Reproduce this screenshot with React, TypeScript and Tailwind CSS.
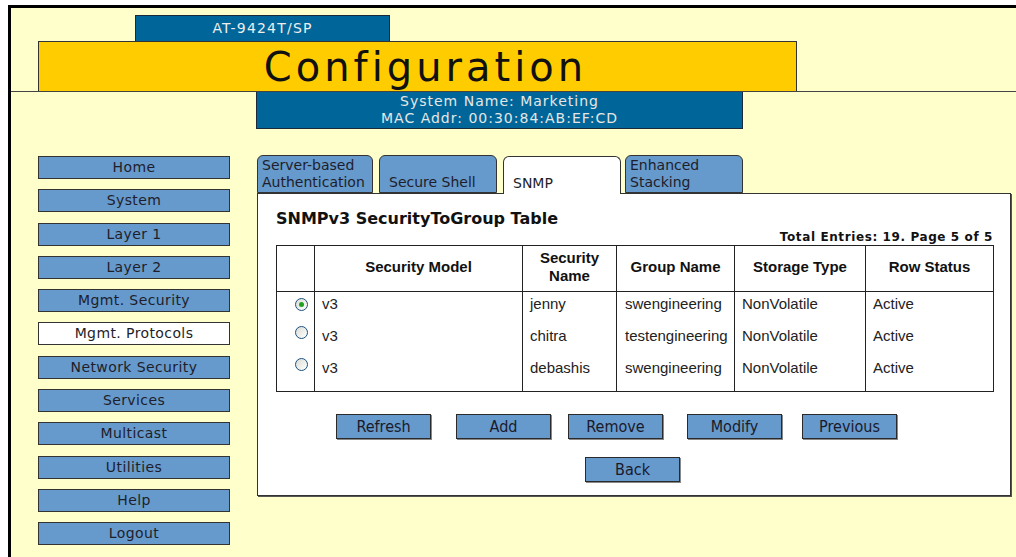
const NAV = [
  'Home',
  'System',
  'Layer 1',
  'Layer 2',
  'Mgmt. Security',
  'Mgmt. Protocols',
  'Network Security',
  'Services',
  'Multicast',
  'Utilities',
  'Help',
  'Logout',
];

const ROWS = [
  { model: 'v3', name: 'jenny', group: 'swengineering', storage: 'NonVolatile', status: 'Active', checked: true },
  { model: 'v3', name: 'chitra', group: 'testengineering', storage: 'NonVolatile', status: 'Active', checked: false },
  { model: 'v3', name: 'debashis', group: 'swengineering', storage: 'NonVolatile', status: 'Active', checked: false },
];

const verdana = "font-['DejaVu_Sans',Verdana,sans-serif]";
const condensed = "font-['DejaVu_Sans_Condensed','DejaVu_Sans',sans-serif]";

function Radio({ checked }: { checked: boolean }) {
  return (
    <span className="inline-flex w-[13px] h-[13px] rounded-full border border-[#1c5180] bg-gradient-to-br from-[#dcdcd5] to-white items-center justify-center">
      {checked && <span className="w-[5px] h-[5px] rounded-full bg-[#21a121]" />}
    </span>
  );
}

function Btn({ label, className = '' }: { label: string; className?: string }) {
  return (
    <div
      className={`w-[95px] h-[25px] bg-[#6699cc] border border-[#2a2a2a] shadow-[1px_1px_0_#888] flex items-center justify-center text-[16px] text-[#1a1a2a] ${condensed} ${className}`}
    >
      {label}
    </div>
  );
}

export default function App() {
  const tabs = [
    { label: ['Server-based', 'Authentication'], w: 'w-[116px]', active: false },
    { label: ['Secure Shell'], w: 'w-[118px] ml-[6px]', active: false },
    { label: ['SNMP'], w: 'w-[118px] ml-[6px]', active: true },
    { label: ['Enhanced', 'Stacking'], w: 'w-[118px] ml-[4px]', active: false },
  ];

  return (
    <div className="w-[1016px] h-[557px] bg-white pt-[5px] pl-[8px] overflow-hidden">
      <div className="w-full h-full border-t-[3px] border-l-[3px] border-black bg-[#ffffcc] flex flex-col">
        {/* header */}
        <div className="pt-[7px]">
          <div
            className={`ml-[124px] w-[255px] h-[26px] bg-[#006699] border border-b-0 border-[#1a2a3a] flex items-center justify-center text-[14px] tracking-[1.2px] text-[#eeeeee] ${verdana}`}
          >
            AT-9424T/SP
          </div>
          <div
            className={`ml-[27px] w-[759px] h-[50px] bg-[#ffcc00] border border-b-0 border-[#333] flex items-center justify-center pl-[16px] text-[40px] tracking-[4px] text-[#111] ${verdana}`}
          >
            Configuration
          </div>
          <div className="border-t border-[#444]" />
          <div
            className={`ml-[245px] w-[487px] h-[37px] bg-[#006699] border border-t-0 border-[#1a2a3a] flex flex-col items-center justify-center text-[14px] tracking-[1px] leading-[17px] text-[#e6e6e6] ${verdana}`}
          >
            <div>System Name: Marketing</div>
            <div>MAC Addr: 00:30:84:AB:EF:CD</div>
          </div>
        </div>

        {/* main */}
        <div className="flex mt-[26px]">
          <div className="ml-[27px] mt-[1px] w-[192px] flex flex-col gap-[10.3px]">
            {NAV.map((n) => (
              <div
                key={n}
                className={`h-[23px] border border-[#333] flex items-center justify-center text-[14px] tracking-[0.4px] text-[#1e1e2a] ${verdana} ${
                  n === 'Mgmt. Protocols' ? 'bg-white' : 'bg-[#6699cc]'
                }`}
              >
                {n}
              </div>
            ))}
          </div>

          <div className="ml-[27px] w-[754px] flex flex-col">
            {/* tabs */}
            <div className="flex h-[38px] items-end">
              {tabs.map((t) => (
                <div
                  key={t.label.join(' ')}
                  className={`${t.w} rounded-t-[6px] border border-[#333] flex flex-col justify-end px-[4px] pb-[1px] text-[14px] leading-[17px] text-[#1e1e2a] ${verdana} ${
                    t.active ? 'h-[38px] bg-white border-b-0 relative z-10 -mb-[1px] pb-[2px] pl-[9px]' : 'h-[38px] bg-[#6699cc]'
                  }`}
                >
                  {t.label.map((l) => (
                    <div key={l} className={t.label.length === 1 && !t.active ? 'pl-[5px]' : ''}>
                      {l}
                    </div>
                  ))}
                </div>
              ))}
            </div>

            {/* panel */}
            <div className="h-[303px] bg-white border border-[#333] shadow-[1px_1px_0_#555] pl-[18px] pt-[16px]">
              <div className={`text-[16px] leading-[18px] font-bold text-[#111] ${verdana}`}>
                SNMPv3 SecurityToGroup Table
              </div>
              <div className={`w-[717px] mt-[2px] text-right text-[12px] tracking-[0.6px] leading-[14px] font-bold text-[#111] ${verdana}`}>
                Total Entries: 19. Page 5 of 5
              </div>
              <table className="mt-[1px] w-[717px] border-collapse border border-[#222] font-['Liberation_Sans',Arial,sans-serif] text-[15px] text-[#222] table-fixed">
                <colgroup>
                  <col className="w-[38px]" />
                  <col className="w-[208px]" />
                  <col className="w-[94px]" />
                  <col className="w-[118px]" />
                  <col className="w-[131px]" />
                  <col className="w-[128px]" />
                </colgroup>
                <thead>
                  <tr className="h-[46px] font-bold leading-[18px] text-[#111]">
                    <th className="border border-[#222] pb-[4px]" />
                    <th className="border border-[#222] pb-[4px]">Security Model</th>
                    <th className="border border-[#222] pb-[4px]">
                      Security
                      <br />
                      Name
                    </th>
                    <th className="border border-[#222] pb-[4px]">Group Name</th>
                    <th className="border border-[#222] pb-[4px]">Storage Type</th>
                    <th className="border border-[#222] pb-[4px]">Row Status</th>
                  </tr>
                </thead>
                <tbody>
                  {ROWS.map((r, i) => (
                    <tr key={r.name} className={i === 2 ? 'h-[36px]' : 'h-[32px]'}>
                      <td className="border-x border-[#222] align-top pt-[1px] text-right pr-[6px] leading-[17px]">
                        <Radio checked={r.checked} />
                      </td>
                      <td className="border-x border-[#222] align-top pt-[1px] px-[7px]">{r.model}</td>
                      <td className="border-x border-[#222] align-top pt-[1px] px-[7px]">{r.name}</td>
                      <td className="border-x border-[#222] align-top pt-[1px] pl-[8px] whitespace-nowrap">{r.group}</td>
                      <td className="border-x border-[#222] align-top pt-[1px] px-[7px]">{r.storage}</td>
                      <td className="border-x border-[#222] align-top pt-[1px] px-[7px]">{r.status}</td>
                    </tr>
                  ))}
                </tbody>
              </table>

              <div className="flex mt-[22px] ml-[60px]">
                <Btn label="Refresh" />
                <Btn label="Add" className="ml-[25px]" />
                <Btn label="Remove" className="ml-[17px]" />
                <Btn label="Modify" className="ml-[24px]" />
                <Btn label="Previous" className="ml-[20px]" />
              </div>
              <div className="flex mt-[18px] ml-[309px]">
                <Btn label="Back" />
              </div>
            </div>
          </div>
        </div>
      </div>
    </div>
  );
}
